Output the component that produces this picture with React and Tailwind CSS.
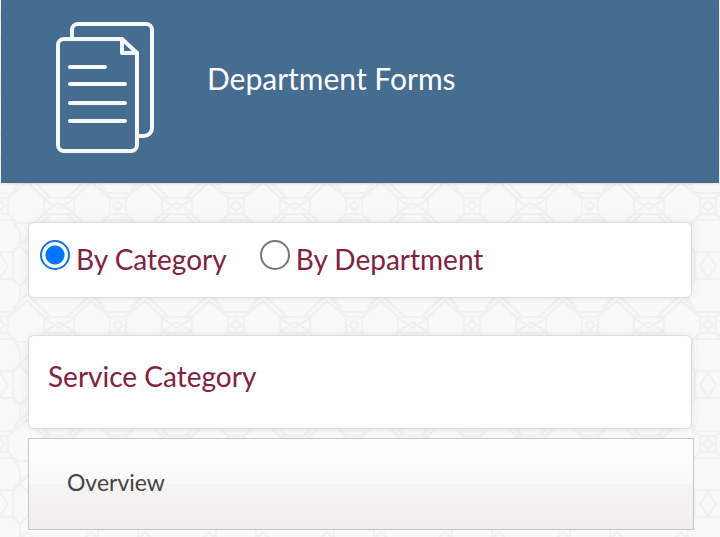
import React, { useState } from 'react';

const PatternBackground = () => (
  <svg className="absolute inset-0 -z-10 h-full w-full" aria-hidden="true">
    <defs>
      <pattern id="lattice" x="-59" y="147" width="118" height="119" patternUnits="userSpaceOnUse">
        <g fill="none" stroke="#f1f1f1" strokeWidth="2.5">
          {/* cells of the horizontal band */}
          <path d="M0 51H15L32 35 51 51H67L86 35 103 51H118M0 67H15L24 76H42L51 67H67L76 76H94L103 67H118" />
          <path d="M15 51V67M51 51V67M67 51V67M103 51V67" />
          <path d="M15 52 0 62M103 52 118 62M15 66 0 56M103 66 118 56M59 54 64 59 59 64 54 59Z" />
          {/* cells of the vertical band */}
          <path d="M46 0V13L39 20V34L46 46M72 0V13L79 20V34L72 46M46 73 39 85V99L46 105V119M72 73 79 85V99L72 105V119" />
          <path d="M46 13H72M46 46H72M46 73H72M46 105H72" />
          <path d="M59 12 51 0 59-12 67 0ZM59 131 51 119 59 107 67 119Z" />
          {/* doubled lines that run between the bands */}
          <path d="M32 28 46 42M32 28 8 51M86 28 72 42M86 28 110 51M32 91 46 105M32 91 8 67M86 91 72 105M86 91 110 67" />
          <path d="M39 20 20 0M79 20 98 0M39 99 20 119M79 99 98 119" />
        </g>
      </pattern>
    </defs>
    <rect width="100%" height="100%" fill="url(#lattice)" />
  </svg>
);

const FormsIcon = () => (
  <svg
    className="h-[134px] w-[100px] shrink-0"
    viewBox="0 0 100 134"
    fill="none"
    stroke="#f4faff"
    strokeWidth="4"
    strokeLinejoin="round"
    strokeLinecap="round"
    aria-hidden="true"
  >
    <path d="M18 17V10a6 6 0 0 1 6-6H92a6 6 0 0 1 6 6V108a8 8 0 0 1-8 8H84" />
    <path d="M68 19H10a6 6 0 0 0-6 6V125a6 6 0 0 0 6 6H77a6 6 0 0 0 6-6V33Z" />
    <path d="M68 19V33H83" />
    <path d="M16 47H51M16 64H71M16 83H71M16 101H71" />
  </svg>
);

const RadioOption = ({ label, value, selected, onChange }) => (
  <label className="flex cursor-pointer gap-1.5">
    <input
      type="radio"
      name="view"
      value={value}
      checked={selected === value}
      onChange={() => onChange(value)}
      className="mt-0.5 size-[30px] shrink-0 appearance-none rounded-full border-2 border-[#767676] bg-white checked:border-[#1a73d9] checked:bg-[radial-gradient(circle,#0075ff_9px,transparent_10px)]"
    />
    <span className="text-[28px] leading-[42px]">{label}</span>
  </label>
);

const App = () => {
  const [view, setView] = useState('category');

  return (
    <div className="relative isolate min-h-screen overflow-hidden bg-[#f9f9f9] pb-2 font-[Lato,sans-serif] text-[#7f2343]">
      <PatternBackground />

      <header className="mx-px flex h-[183px] items-start gap-[53px] bg-[#466c90] pt-5 pl-[53px] text-white shadow-sm">
        <FormsIcon />
        <h1 className="pt-10 text-[30px] leading-9">Department Forms</h1>
      </header>

      <main className="pt-[39px] pr-[26px] pl-7">
        <div
          role="radiogroup"
          aria-label="View forms"
          className="mr-0.5 flex h-[76px] gap-[33px] rounded-md border border-[#dcdcdc] bg-white pt-[15px] pl-[11px] shadow-[0_0_10px_rgba(0,0,0,0.08)]"
        >
          <RadioOption label="By Category" value="category" selected={view} onChange={setView} />
          <RadioOption label="By Department" value="department" selected={view} onChange={setView} />
        </div>

        <section className="mt-[37px] mr-0.5 h-[94px] rounded-md border border-[#dcdcdc] bg-white pt-[19px] pl-[19px] shadow-[0_0_10px_rgba(0,0,0,0.08)]">
          <h2 className="text-[28px] leading-[42px]">Service Category</h2>
        </section>

        <button
          type="button"
          className="mt-[9px] block h-[92px] w-full cursor-pointer border border-[#c5c5c5] bg-[linear-gradient(#ffffff,#faf9fa_50%,#f5f3f4_50%,#f0eeef)] pb-1 pl-[38px] text-left text-[23px] text-[#444444]"
        >
          Overview
        </button>
      </main>
    </div>
  );
};

export default App;
